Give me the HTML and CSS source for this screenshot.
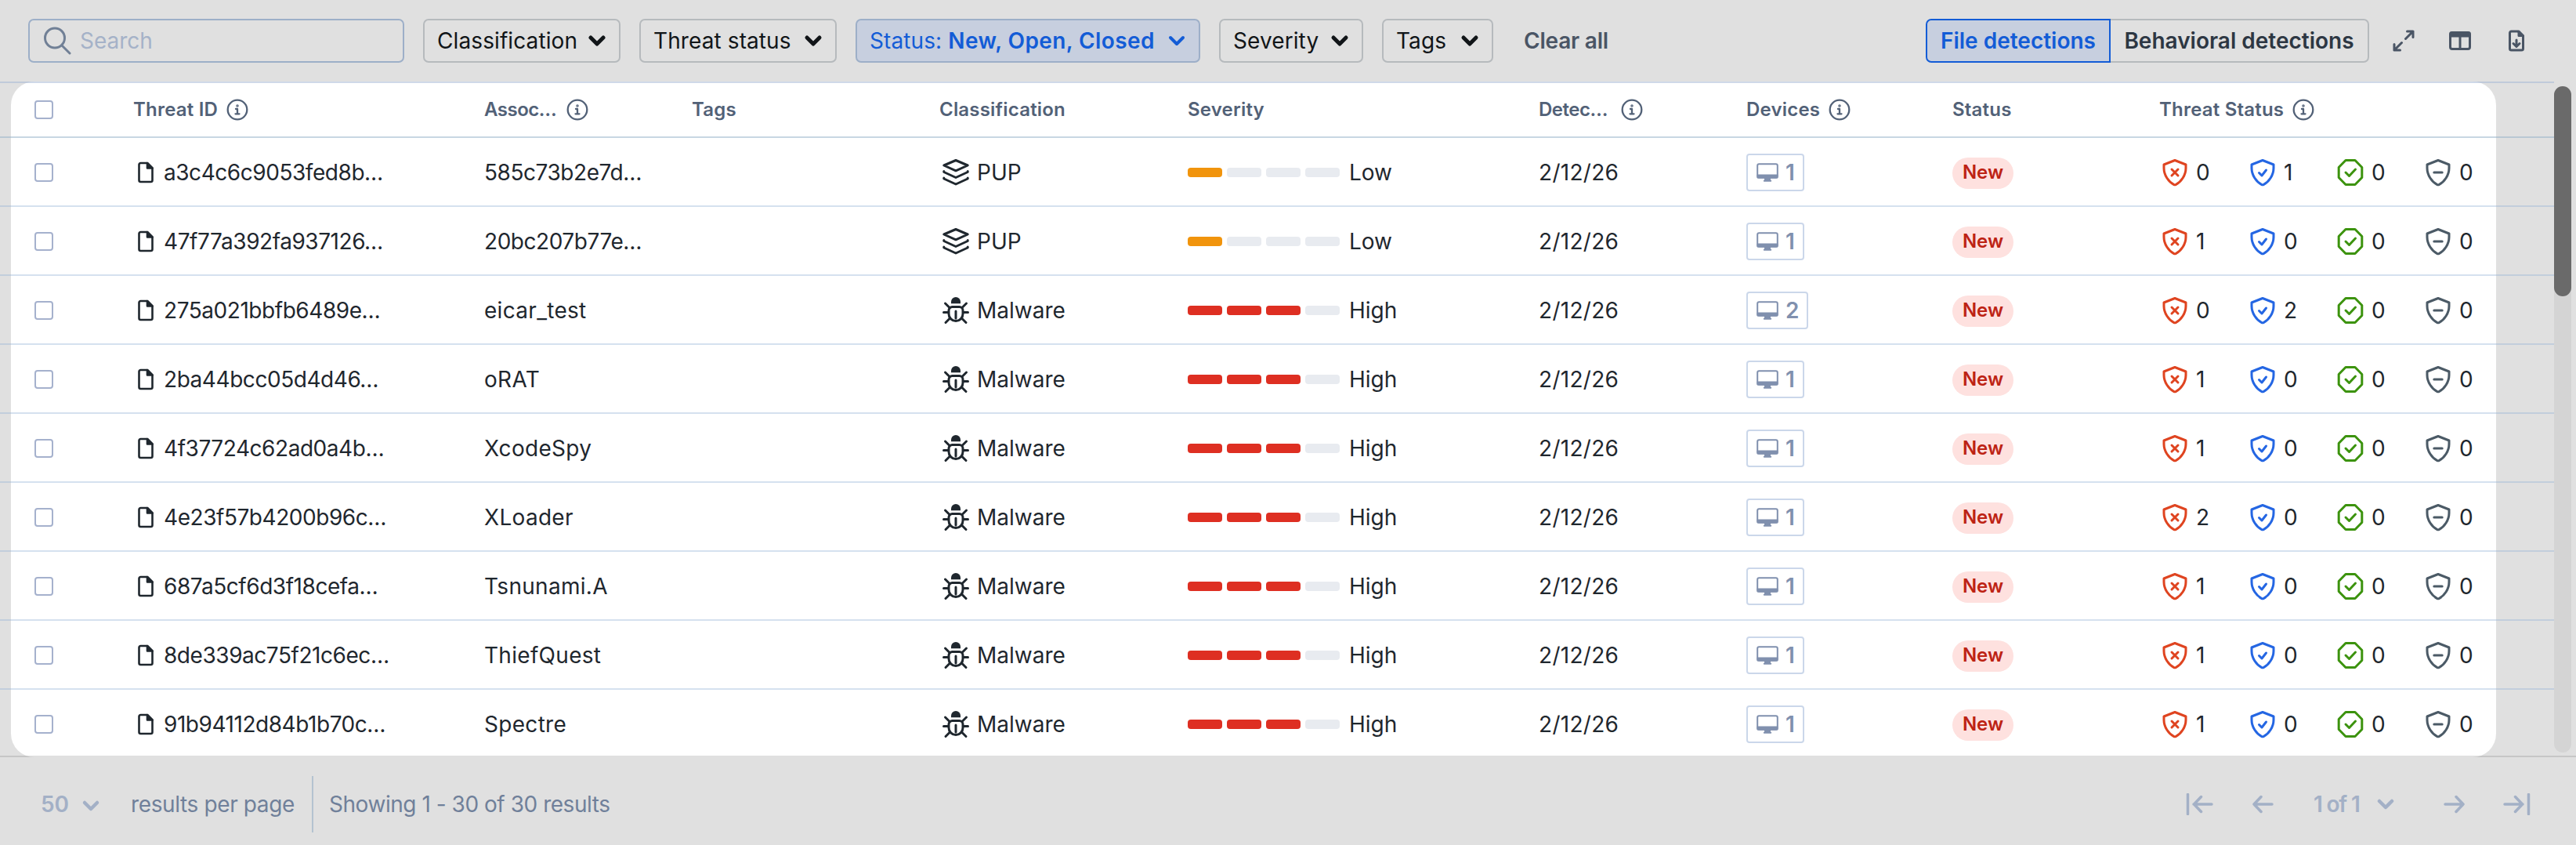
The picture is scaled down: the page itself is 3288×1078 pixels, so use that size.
FILE: index.html
```
<!DOCTYPE html>
<html lang="en">
<head>
    <meta charset="UTF-8">
    <meta name="viewport" content="width=device-width, initial-scale=1.0">
    <title>Threats</title>
    <link rel="stylesheet" href="styles.css">
</head>
<body>
    <svg class="sprite" xmlns="http://www.w3.org/2000/svg">
        <symbol id="i-search" viewBox="0 0 36 36"><circle cx="15" cy="14.500" r="12.500"/><path d="M24 24l10 10"/></symbol>
        <symbol id="i-chevron" viewBox="0 0 24 16"><path d="M4 4l8 8 8-8"/></symbol>
        <symbol id="i-info" viewBox="0 0 28 28"><circle cx="14" cy="14" r="12.300"/><path d="M12 13h2v6M11.500 19.300h5"/><circle class="solid" cx="14" cy="9" r=".6"/></symbol>
        <symbol id="i-file" viewBox="0 0 20 28"><path d="M3.500 2H12l6.500 6.500V24a2 2 0 0 1-2 2h-13a2 2 0 0 1-2-2V4a2 2 0 0 1 2-2z"/><path class="solid" d="M12 2l6.500 6.500H12z"/></symbol>
        <symbol id="i-layers" viewBox="0 0 36 36"><path d="M2.800 9L18 2.500 33.200 9 18 15.800zM2.800 16.500v1L18 24.500l15.200-7v-1M2.800 25v1L18 33l15.200-7v-1"/></symbol>
        <symbol id="i-bug" viewBox="0 0 36 36"><path class="head-shape" d="M12 9.200V7a6 6 0 0 1 12 0v2.200z"/><path d="M13.500 13.500h9a4.500 4.500 0 0 1 4.500 4.500v4.500a9 9 0 0 1-18 0V18a4.500 4.500 0 0 1 4.500-4.500zM18 19v9M2.500 20.500H8M28 20.500h5.500M4.500 9l5 5M31.500 9l-5 5M5 33.500l5-5M31 33.500l-5-5"/></symbol>
        <symbol id="i-monitor" viewBox="0 0 28 24"><rect x="1.200" y="1.200" width="25.600" height="17.600" rx="2"/><path class="solid" d="M1.500 15.500h25v3h-25zM11 19h6v3h-6zM9.800 22.800h8.400"/></symbol>
        <symbol id="i-shield-x" viewBox="0 0 34 36"><path d="M17 2.500l14 5.500v4.500c0 9-6 17.500-12.500 20.800q-1.500.7-3 0C9 30 3 21.500 3 12.500V8z"/><path d="M13 14l8 8M21 14l-8 8"/></symbol>
        <symbol id="i-shield-check" viewBox="0 0 34 36"><path d="M17 2.500l14 5.500v4.500c0 9-6 17.500-12.500 20.800q-1.500.7-3 0C9 30 3 21.500 3 12.500V8z"/><path d="M12.500 18.500l3.500 3.500 5.500-7"/></symbol>
        <symbol id="i-shield-minus" viewBox="0 0 34 36"><path d="M17 2.500l14 5.500v4.500c0 9-6 17.500-12.500 20.800q-1.500.7-3 0C9 30 3 21.500 3 12.500V8z"/><path d="M11.800 18h10.400"/></symbol>
        <symbol id="i-octagon" viewBox="0 0 34 36"><path d="M11 2.500h12l8.800 9v13l-8.800 9H11l-8.800-9v-13z"/><path d="M11 18l4.500 4.500 8-8.500"/></symbol>
        <symbol id="i-expand" viewBox="0 0 28 28"><path d="M16.500 11.500l9.500-9.500M18.500 2H26v7.500M11.500 16.500L2 26M2 18.500V26h7.500"/></symbol>
        <symbol id="i-columns" viewBox="0 0 28 24"><rect x="1.500" y="1.500" width="25" height="21" rx="2.500"/><path class="solid" d="M2 2h24v4H2z"/><path d="M14 6v16"/></symbol>
        <symbol id="i-export" viewBox="0 0 20 28"><path d="M3.500 2H12l6.500 6.500V24a2 2 0 0 1-2 2h-13a2 2 0 0 1-2-2V4a2 2 0 0 1 2-2z"/><path class="solid" d="M13 2l5.500 5.500H13z"/><path d="M10 13v8M6 17.500l4 4 4-4"/></symbol>
        <symbol id="i-arrow" viewBox="0 0 36 28"><path d="M30 14H7M16 4.500L7 14l9 9.500"/></symbol>
        <symbol id="i-first" viewBox="0 0 36 28"><path d="M2.500 1.500v25M33 14H10M19.500 4.500L10.500 14l9 9.500"/></symbol>
    </svg>

    <div class="page">
        <div class="toolbar">
            <div class="search">
                <svg class="icon-search"><use href="#i-search"/></svg>
                <span>Search</span>
            </div>
            <button class="filter f-classification"><span>Classification</span><svg class="chevron"><use href="#i-chevron"/></svg></button>
            <button class="filter f-threat"><span>Threat status</span><svg class="chevron"><use href="#i-chevron"/></svg></button>
            <button class="filter f-status active"><span>Status: <b>New, Open, Closed</b></span><svg class="chevron"><use href="#i-chevron"/></svg></button>
            <button class="filter f-severity"><span>Severity</span><svg class="chevron"><use href="#i-chevron"/></svg></button>
            <button class="filter f-tags"><span>Tags</span><svg class="chevron"><use href="#i-chevron"/></svg></button>
            <a class="clear">Clear all</a>
            <div class="segmented">
                <button class="seg seg-file">File detections</button>
                <button class="seg seg-behavior">Behavioral detections</button>
            </div>
            <div class="tools">
                <svg class="expand"><use href="#i-expand"/></svg>
                <svg class="columns"><use href="#i-columns"/></svg>
                <svg class="export"><use href="#i-export"/></svg>
            </div>
        </div>

        <div class="content">
            <div class="table">
                <div class="row head">
                    <div><span class="checkbox"></span></div>
                    <div><span>Threat ID</span><svg class="info"><use href="#i-info"/></svg></div>
                    <div><span class="cut">Assoc…</span><svg class="info"><use href="#i-info"/></svg></div>
                    <div>Tags</div>
                    <div>Classification</div>
                    <div>Severity</div>
                    <div><span class="cut">Detec…</span><svg class="info"><use href="#i-info"/></svg></div>
                    <div><span>Devices</span><svg class="info"><use href="#i-info"/></svg></div>
                    <div>Status</div>
                    <div><span>Threat Status</span><svg class="info"><use href="#i-info"/></svg></div>
                </div>
            </div>
            <div class="scrollbar"><div class="thumb"></div></div>
        </div>

        <div class="footer">
            <div class="page-size">50<svg class="chevron"><use href="#i-chevron"/></svg></div>
            <span class="per-page">results per page</span>
            <span class="showing">Showing 1 - 30 of 30 results</span>
            <div class="pager">
                <svg class="arrow first"><use href="#i-first"/></svg>
                <svg class="arrow prev"><use href="#i-arrow"/></svg>
                <div class="page-no"><span>1 of 1</span><svg class="chevron"><use href="#i-chevron"/></svg></div>
                <svg class="arrow next"><use href="#i-arrow"/></svg>
                <svg class="arrow last"><use href="#i-first"/></svg>
            </div>
        </div>
    </div>

    <script src="app.js"></script>
</body>
</html>
```
FILE: styles.css
```
* {
    margin: 0;
    padding: 0;
    box-sizing: border-box;
}

body {
    font-family: Inter, "Liberation Sans", sans-serif;
    font-size: 28px;
    color: #1f272e;
    background: #e0e0e0;
}

button {
    font: inherit;
    background: none;
}

svg {
    flex: none;
    fill: none;
    stroke: currentColor;
    stroke-width: 3;
    stroke-linecap: round;
    stroke-linejoin: round;
}

svg .solid {
    fill: currentColor;
}

svg .head-shape {
    fill: currentColor;
    stroke: none;
}

.sprite {
    display: none;
}

.page {
    width: 3288px;
    height: 1078px;
    display: flex;
    flex-direction: column;
    overflow: hidden;
}

/* toolbar */
.toolbar {
    height: 104px;
    flex: none;
    display: flex;
    align-items: center;
    padding: 0 66px 0 36px;
    white-space: nowrap;
}

.search {
    width: 480px;
    height: 56px;
    border: 2px solid #9dafc8;
    border-radius: 7px;
    display: flex;
    align-items: center;
    padding-left: 17px;
    margin-right: 24px;
    color: #a5b2c8;
}

.icon-search {
    width: 36px;
    height: 36px;
    margin-right: 11px;
    color: #718096;
}

.filter {
    height: 56px;
    border: 2px solid #b6babd;
    border-radius: 7px;
    color: #111518;
    padding: 0 16px;
    margin-right: 24px;
    display: flex;
    align-items: center;
    justify-content: space-between;
    letter-spacing: 0.1px;
}

.f-classification { width: 252px; }
.f-threat { width: 252px; }
.f-status { width: 440px; }
.f-severity { width: 184px; }
.f-tags { width: 142px; }

.filter.active {
    background: #c7cfdf;
    border-color: #9dafc8;
    color: #135cd6;
}

.filter b {
    font-weight: 600;
    letter-spacing: 0.4px;
}

.chevron {
    width: 24px;
    height: 16px;
    stroke-width: 5;
}

.active .chevron {
    stroke-width: 4;
}

.clear {
    margin-left: 15px;
    color: #4a5565;
    font-weight: 600;
    letter-spacing: -0.2px;
}

.segmented {
    display: flex;
    margin-left: auto;
}

.seg {
    height: 56px;
    border: 2px solid #b6babd;
    font-weight: 600;
}

.seg-file {
    width: 236px;
    border-color: #135cd6;
    border-radius: 7px 0 0 7px;
    background: #c7cfdf;
    color: #135cd6;
}

.seg-behavior {
    width: 330px;
    border-left: 0;
    border-radius: 0 7px 7px 0;
    color: #2d3743;
}

.tools {
    display: flex;
    align-items: center;
    margin-left: 30px;
    color: #4a5565;
}

.expand { width: 28px; height: 28px; margin-right: 44px; }
.columns { width: 28px; height: 24px; margin-right: 48px; }
.export { width: 20px; height: 28px; }

/* table */
.content {
    height: 862px;
    flex: none;
    position: relative;
    border-bottom: 2px solid #c6c6c6;
}

.content::before {
    content: "";
    position: absolute;
    left: 14px;
    top: 0;
    width: 3172px;
    height: 862px;
    border-radius: 30px;
    background: linear-gradient(#fff 860px, #e0e0e0 860px);
}

.table {
    position: relative;
    width: 3260px;
    border-top: 2px solid rgba(160, 180, 212, 0.5);
}

.row {
    height: 88px;
    display: grid;
    grid-template-columns: 126px 448px 265px 316px 317px 448px 265px 263px 264px 1fr;
    padding: 2px 0 0 44px;
    border-bottom: 2px solid rgba(150, 180, 215, 0.4);
}

.row:last-child {
    height: 86px;
    border-bottom: 0;
}

.row > div {
    display: flex;
    align-items: center;
    white-space: nowrap;
}

.head {
    height: 70px;
    padding: 0 0 2px 44px;
    font-size: 24px;
    font-weight: 600;
    letter-spacing: 0.2px;
    color: #526177;
    border-color: rgba(145, 175, 200, 0.5);
}

.head .checkbox,
.head .info {
    margin-top: 2px;
}

.info {
    width: 28px;
    height: 28px;
    stroke-width: 2.300;
    margin-left: 11px;
}

.cut {
    width: 94px;
    letter-spacing: -0.5px;
}

.checkbox {
    width: 24px;
    height: 24px;
    border: 2px solid #a5b1cd;
    border-radius: 4px;
}

.file {
    width: 20px;
    height: 28px;
    margin: 0 13px 0 6px;
    stroke-width: 2.600;
}

.hash {
    letter-spacing: -0.45px;
}

.name,
.date {
    letter-spacing: 0.3px;
}

.kind {
    width: 36px;
    height: 36px;
    margin: 0 9px 0 3px;
}

.bar {
    width: 44px;
    height: 12px;
    border-radius: 4px;
    background: #e8ebf0;
    margin-right: 6px;
}

.bar.low { background: #f1940c; }
.bar.high { background: #de2f22; }

.severity-text {
    margin-left: 6px;
}

.devices {
    height: 48px;
    border: 2px solid #cbd7ea;
    border-radius: 4px;
    display: flex;
    align-items: center;
    padding: 0 10px 0 11px;
    color: #8090ae;
    font-weight: 600;
}

.devices svg {
    width: 28px;
    height: 24px;
    stroke-width: 2;
    margin-right: 9px;
}

.badge {
    width: 78px;
    height: 40px;
    margin-top: 2px;
    border-radius: 20px;
    background: #fee1df;
    color: #bd2314;
    font-size: 24px;
    font-weight: 600;
    line-height: 38px;
    text-align: center;
}

.count {
    width: 112px;
    display: flex;
    align-items: center;
}

.count svg {
    width: 34px;
    height: 36px;
    margin: 0 10px 0 3px;
}

.blocked svg { color: #df4420; }
.resolved svg { color: #2466e3; }
.benign svg { color: #3c930e; }
.ignored svg { color: #4b5a66; }

.scrollbar {
    position: absolute;
    left: 3260px;
    top: 6px;
    width: 22px;
    height: 850px;
    border-radius: 11px;
    background: #d4d4d4;
}

.thumb {
    height: 268px;
    border-radius: 11px;
    background: #6a6a6a;
}

/* footer */
.footer {
    flex: 1;
    display: flex;
    align-items: center;
    padding: 8px 58px 0 52px;
    color: #70809a;
    white-space: nowrap;
}

.page-size {
    width: 115px;
    font-weight: 600;
    color: #a3b0c6;
}

.page-size .chevron {
    margin-left: 16px;
}

.footer .chevron {
    stroke-width: 4.500;
}

.per-page {
    width: 231px;
    letter-spacing: -0.38px;
}

.showing {
    height: 72px;
    line-height: 72px;
    border-left: 2px solid #b4c3d0;
    padding-left: 20px;
    letter-spacing: -0.46px;
}

.pager {
    margin-left: auto;
    display: flex;
    align-items: center;
    color: #a3b0c6;
    font-weight: 600;
}

.page-no {
    width: 104px;
    margin: 0 58px 0 47px;
    display: flex;
    align-items: center;
    justify-content: space-between;
    letter-spacing: -1.2px;
}

.arrow {
    width: 36px;
    height: 28px;
    stroke-width: 3.500;
}

.first {
    margin-right: 44px;
}

.last {
    margin-left: 43px;
}

.next,
.last {
    transform: scaleX(-1);
}
```
FILE: app.js
```
const threats = [
    ['a3c4c6c9053fed8b…', '585c73b2e7d…', 'PUP', 1, [0, 1, 0, 0]],
    ['47f77a392fa937126…', '20bc207b77e…', 'PUP', 1, [1, 0, 0, 0]],
    ['275a021bbfb6489e…', 'eicar_test', 'Malware', 2, [0, 2, 0, 0]],
    ['2ba44bcc05d4d46…', 'oRAT', 'Malware', 1, [1, 0, 0, 0]],
    ['4f37724c62ad0a4b…', 'XcodeSpy', 'Malware', 1, [1, 0, 0, 0]],
    ['4e23f57b4200b96c…', 'XLoader', 'Malware', 1, [2, 0, 0, 0]],
    ['687a5cf6d3f18cefa…', 'Tsnunami.A', 'Malware', 1, [1, 0, 0, 0]],
    ['8de339ac75f21c6ec…', 'ThiefQuest', 'Malware', 1, [1, 0, 0, 0]],
    ['91b94112d84b1b70c…', 'Spectre', 'Malware', 1, [1, 0, 0, 0]]
];

const states = [
    ['blocked', 'shield-x'],
    ['resolved', 'shield-check'],
    ['benign', 'octagon'],
    ['ignored', 'shield-minus']
];

const icon = (name, cls) => `<svg class="${cls || ''}"><use href="#i-${name}"/></svg>`;

function severity(kind) {
    const level = kind === 'PUP' ? 'low' : 'high';
    const filled = kind === 'PUP' ? 1 : 3;
    let html = '';
    for (let i = 0; i < 4; i++) {
        html += `<span class="bar ${i < filled ? level : ''}"></span>`;
    }
    return html + `<span class="severity-text">${kind === 'PUP' ? 'Low' : 'High'}</span>`;
}

const table = document.querySelector('.table');

threats.forEach(([id, name, kind, devices, counts]) => {
    const row = document.createElement('div');
    row.className = 'row';
    row.innerHTML = `
        <div><span class="checkbox"></span></div>
        <div>${icon('file', 'file')}<span class="hash">${id}</span></div>
        <div><span class="${name.endsWith('…') ? 'hash' : 'name'}">${name}</span></div>
        <div></div>
        <div>${icon(kind === 'PUP' ? 'layers' : 'bug', 'kind')}<span>${kind}</span></div>
        <div>${severity(kind)}</div>
        <div><span class="date">2/12/26</span></div>
        <div><span class="devices">${icon('monitor')}${devices}</span></div>
        <div><span class="badge">New</span></div>
        <div>${states.map(([cls, name], i) => `<span class="count ${cls}">${icon(name)}${counts[i]}</span>`).join('')}</div>
    `;
    table.appendChild(row);
});
```
